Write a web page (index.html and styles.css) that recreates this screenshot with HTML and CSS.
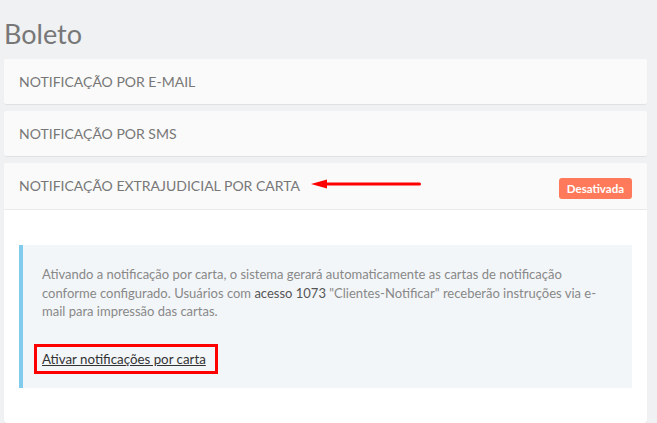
FILE: index.html
```html
<!DOCTYPE html>
<html lang="pt-BR">
<head>
<meta charset="utf-8">
<title>Boleto</title>
<link rel="stylesheet" href="styles.css">
</head>
<body>
<div class="page">
  <h1 class="title">Boleto</h1>
  <div class="card">
    <div class="card-header"><span class="card-title">Notificação por e-mail</span></div>
  </div>
  <div class="card">
    <div class="card-header"><span class="card-title">Notificação por SMS</span></div>
  </div>
  <div class="card card-open">
    <div class="card-header card-header-open">
      <span class="card-title">Notificação extrajudicial por carta</span>
      <span class="badge">Desativada</span>
      <svg class="arrow" width="112" height="12" viewBox="0 0 112 12" aria-hidden="true">
        <path d="M0 6 L16 1.5 L16 10.5 Z" fill="#f00"/>
        <rect x="14" y="4.5" width="96" height="3" rx="1.5" fill="#f00"/>
      </svg>
    </div>
    <div class="card-body">
      <div class="info">
        <p class="info-text">Ativando a notificação por carta, o sistema gerará automaticamente as cartas de notificação conforme configurado. Usuários com <span class="strong">acesso 1073</span> "Clientes-Notificar" receberão instruções via e-mail para impressão das cartas.</p>
        <a class="action" href="#">Ativar notificações por carta</a>
      </div>
    </div>
  </div>
</div>
</body>
</html>
```
FILE: styles.css
```css
* { box-sizing: border-box; }
html, body { margin: 0; padding: 0; }
body {
  background: #f0f1f3;
  font-family: Lato, "Open Sans", sans-serif;
  color: #777;
}
.page {
  padding: 0 10px 0 4px;
}
.title {
  margin: 0;
  padding-top: 18px;
  height: 59px;
  font-size: 27px;
  font-weight: 400;
  line-height: 32px;
  color: #777;
}
.card {
  background: #fff;
  border-radius: 3px;
  box-shadow: 0 1px 1px rgba(0, 0, 0, 0.07);
  margin-bottom: 7px;
  overflow: hidden;
}
.card-header {
  position: relative;
  background: #fafafa;
  height: 45px;
  padding: 0 15px;
  display: flex;
  align-items: center;
  justify-content: space-between;
}
.card-header-open {
  height: 47px;
  border-bottom: 1px solid #eaeaea;
}
.card-title {
  text-transform: uppercase;
  font-size: 14px;
  color: #777;
  line-height: 20px;
}
.badge {
  background: #ff7a5a;
  color: #fff;
  font-size: 11.5px;
  font-weight: 700;
  line-height: 21px;
  height: 21px;
  padding: 0 8px;
  border-radius: 3px;
  margin-top: 4px;
}
.arrow {
  position: absolute;
  left: 307px;
  top: 15px;
}
.card-body {
  padding: 15px;
}
.info {
  margin: 20px 0;
  background: #f3f6f9;
  border-left: 4px solid #81ccec;
  padding: 20px 20px 20px 19px;
}
.info-text {
  margin: 0 0 27px;
  font-size: 13px;
  line-height: 18.6px;
  color: #888;
}
.strong { color: #555; }
.action {
  display: inline-block;
  font-size: 13.3px;
  line-height: 18px;
  color: #333;
  text-decoration: underline;
  border: 3px solid #f00;
  padding: 3px 9px 3px 5px;
  margin: -6px 0 -6px -8px;
}
```
